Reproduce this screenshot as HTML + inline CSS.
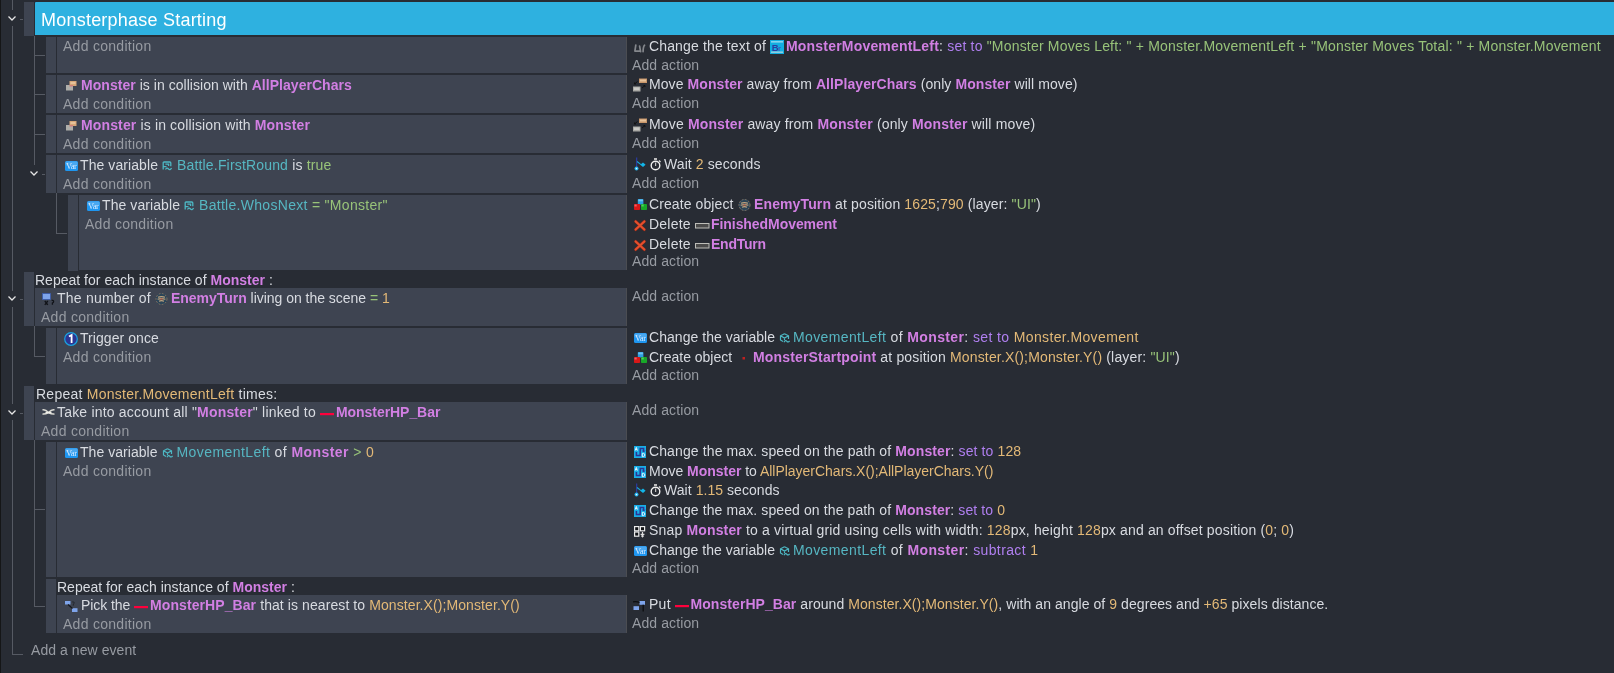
<!DOCTYPE html><html><head><meta charset="utf-8"><style>
html,body{margin:0;padding:0;}
body{width:1614px;height:673px;overflow:hidden;background:#282c34;position:relative;font-family:"Liberation Sans",sans-serif;}
body>div{position:absolute;}
.t{height:16px;line-height:16px;font-size:14px;white-space:pre;will-change:transform;color:#d8dbe1;}
.w{color:#d8dbe1;}
.add{color:#979ba2;}
.o{color:#d27fe3;font-weight:bold;}
.v{color:#56b6c2;}
.str{color:#98c379;}
.num{color:#e3b977;}
.op{color:#b07ff0;}
.hd{color:#ffffff;font-size:18px;}
.ic{display:inline-block;position:relative;height:0;vertical-align:baseline;}
.ic svg{position:absolute;left:0;display:block;overflow:visible;}
</style></head><body>
<div style="left:0px;top:0px;width:1px;height:673px;background:#151617;"></div>
<div style="left:12px;top:0px;width:1px;height:10px;background:#565a63;"></div>
<div style="left:12px;top:26px;width:1px;height:265px;background:#565a63;"></div>
<div style="left:12px;top:307px;width:1px;height:97px;background:#565a63;"></div>
<div style="left:12px;top:420px;width:1px;height:235px;background:#565a63;"></div>
<div style="left:12px;top:654px;width:11px;height:1px;background:#565a63;"></div>
<div style="left:24px;top:2px;width:10px;height:34px;background:#3e4451;"></div>
<div style="left:35px;top:2px;width:1579px;height:33px;background:#2eb1e0;border-top-left-radius:1px;"></div>
<div class="t" style="left:41px;top:12px;letter-spacing:0.223px;"><span class="hd">Monsterphase Starting</span></div>
<div style="left:34px;top:36px;width:1px;height:129px;background:#565a63;"></div>
<div style="left:46px;top:37px;width:10px;height:36px;background:#3e4451;"></div>
<div style="left:57px;top:37px;width:569px;height:36px;background:#3e4451;"></div>
<div style="left:626px;top:37px;width:1px;height:36px;background:#4b4d52;"></div>
<div style="left:35px;top:55px;width:10px;height:1px;background:#565a63;"></div>
<div class="t" style="left:63px;top:38px;letter-spacing:0.281px;"><span class="add">Add condition</span></div>
<div class="t" style="left:634px;top:38px;letter-spacing:0.141px;"><span class="ic" style="width:11px;margin-left:0px;margin-right:4px"><svg style="top:-7px" width="11" height="9" viewBox="0 0 11 9"><path d="M1.8 1.2 L0.9 7 M5.6 2.2 L6.6 7.6 M1 7.2 H6.4 M10.6 1.2 Q9.2 2.4 9.1 7.6" stroke="#84878c" stroke-width="1.7" fill="none" stroke-linecap="round"/></svg></span><span class="w">Change the text of </span></div>
<div class="t" style="left:770px;top:38px;letter-spacing:0.194px;"><span class="ic" style="width:14px;margin-left:0px;margin-right:2px"><svg style="top:-11px" width="14" height="14" viewBox="0 0 14 14"><rect x="0" y="0" width="14" height="14" fill="#12aee0"/><rect x="1" y="1" width="12" height="1.6" fill="#84d4ee"/><rect x="1" y="11.4" width="12" height="1.6" fill="#8ccbe0"/><text x="1.8" y="10.6" font-family="Liberation Sans" font-weight="bold" font-size="9.5" fill="#2b3aa0">B</text><text x="8" y="10.6" font-family="Liberation Sans" font-weight="bold" font-size="7.5" fill="#3a5ab8">r</text></svg></span><span class="o">MonsterMovementLeft</span><span class="w">: </span><span class="op">set to</span><span class="str"> "Monster Moves Left: " + Monster.MovementLeft + "Monster Moves Total: " + Monster.Movement</span></div>
<div class="t" style="left:632px;top:57px;letter-spacing:0.103px;"><span class="add">Add action</span></div>
<div style="left:46px;top:75px;width:10px;height:38px;background:#3e4451;"></div>
<div style="left:57px;top:75px;width:569px;height:38px;background:#3e4451;"></div>
<div style="left:626px;top:75px;width:1px;height:38px;background:#4b4d52;"></div>
<div style="left:35px;top:94px;width:10px;height:1px;background:#565a63;"></div>
<div class="t" style="left:66px;top:77px;letter-spacing:0.037px;"><span class="ic" style="width:11px;margin-left:0px;margin-right:4px"><svg style="top:-9px" width="11" height="10" viewBox="0 0 11 10"><rect x="3.5" y="0" width="7" height="5" fill="#d6a677"/><rect x="4.5" y="1" width="5" height="2" fill="#e6c29a"/><rect x="0" y="4" width="7" height="5.5" fill="#aeaeaa"/><rect x="3.5" y="4" width="3.5" height="1.5" fill="#cf7f7c"/></svg></span><span class="o">Monster</span><span class="w"> is in collision with </span><span class="o">AllPlayerChars</span></div>
<div class="t" style="left:63px;top:96px;letter-spacing:0.281px;"><span class="add">Add condition</span></div>
<div class="t" style="left:633px;top:76px;letter-spacing:0.085px;"><span class="ic" style="width:14px;margin-left:0px;margin-right:2px"><svg style="top:-11px" width="14" height="14" viewBox="0 0 14 14"><rect x="6" y="0.5" width="8" height="4.5" fill="#c8966a"/><rect x="7" y="1.5" width="6" height="2" fill="#e5c29a"/><rect x="0" y="8.5" width="7.5" height="5" fill="#a8a8a4"/><rect x="1" y="9.5" width="5.5" height="2.5" fill="#c9c9c5"/><path d="M4.5 3.5 L1.5 6 M1.5 6 H3 M1.5 6 V4.5 M9 10 L12 7.5 M12 7.5 H10.5 M12 7.5 V9" stroke="#111" stroke-width="1" fill="none"/></svg></span><span class="w">Move </span><span class="o">Monster</span><span class="w"> away from </span><span class="o">AllPlayerChars</span><span class="w"> (only </span><span class="o">Monster</span><span class="w"> will move)</span></div>
<div class="t" style="left:632px;top:95px;letter-spacing:0.103px;"><span class="add">Add action</span></div>
<div style="left:46px;top:115px;width:10px;height:38px;background:#3e4451;"></div>
<div style="left:57px;top:115px;width:569px;height:38px;background:#3e4451;"></div>
<div style="left:626px;top:115px;width:1px;height:38px;background:#4b4d52;"></div>
<div style="left:35px;top:134px;width:10px;height:1px;background:#565a63;"></div>
<div class="t" style="left:66px;top:117px;letter-spacing:0.140px;"><span class="ic" style="width:11px;margin-left:0px;margin-right:4px"><svg style="top:-9px" width="11" height="10" viewBox="0 0 11 10"><rect x="3.5" y="0" width="7" height="5" fill="#d6a677"/><rect x="4.5" y="1" width="5" height="2" fill="#e6c29a"/><rect x="0" y="4" width="7" height="5.5" fill="#aeaeaa"/><rect x="3.5" y="4" width="3.5" height="1.5" fill="#cf7f7c"/></svg></span><span class="o">Monster</span><span class="w"> is in collision with </span><span class="o">Monster</span></div>
<div class="t" style="left:63px;top:136px;letter-spacing:0.281px;"><span class="add">Add condition</span></div>
<div class="t" style="left:633px;top:116px;letter-spacing:0.149px;"><span class="ic" style="width:14px;margin-left:0px;margin-right:2px"><svg style="top:-11px" width="14" height="14" viewBox="0 0 14 14"><rect x="6" y="0.5" width="8" height="4.5" fill="#c8966a"/><rect x="7" y="1.5" width="6" height="2" fill="#e5c29a"/><rect x="0" y="8.5" width="7.5" height="5" fill="#a8a8a4"/><rect x="1" y="9.5" width="5.5" height="2.5" fill="#c9c9c5"/><path d="M4.5 3.5 L1.5 6 M1.5 6 H3 M1.5 6 V4.5 M9 10 L12 7.5 M12 7.5 H10.5 M12 7.5 V9" stroke="#111" stroke-width="1" fill="none"/></svg></span><span class="w">Move </span><span class="o">Monster</span><span class="w"> away from </span><span class="o">Monster</span><span class="w"> (only </span><span class="o">Monster</span><span class="w"> will move)</span></div>
<div class="t" style="left:632px;top:135px;letter-spacing:0.103px;"><span class="add">Add action</span></div>
<div style="left:46px;top:155px;width:10px;height:38px;background:#3e4451;"></div>
<div style="left:57px;top:155px;width:569px;height:38px;background:#3e4451;"></div>
<div style="left:626px;top:155px;width:1px;height:38px;background:#4b4d52;"></div>
<div class="t" style="left:65px;top:157px;letter-spacing:0.082px;"><span class="ic" style="width:13px;margin-left:0px;margin-right:2px"><svg style="top:-9px" width="13" height="10" viewBox="0 0 13 10"><rect x="0" y="0" width="13" height="10" rx="1.5" fill="#1e96f0"/><rect x="0.5" y="0.5" width="12" height="4" rx="1" fill="#4aa8f0"/><text x="6.5" y="8.3" font-family="Liberation Serif" font-size="8.5" fill="#dcecff" text-anchor="middle" textLength="11">Var</text></svg></span><span class="w">The variable </span></div>
<div class="t" style="left:162px;top:157px;letter-spacing:0.172px;"><span class="ic" style="width:10px;margin-left:0px;margin-right:5px"><svg style="top:-9px" width="10" height="9" viewBox="0 0 10 9"><path d="M1.2 8.5 V1.8 Q1.2 1 2 1 H7.8 Q8.8 1 8.8 2 V5.2 M3.4 3.2 H6.6 V5 M1.2 5.6 H4.5 M3.5 8.5 Q5 6 6.5 8 Q8 9.5 9.6 7.2" stroke="#4db8c4" stroke-width="1.3" fill="none"/></svg></span><span class="v">Battle.FirstRound</span><span class="w"> is </span><span class="str">true</span></div>
<div class="t" style="left:63px;top:176px;letter-spacing:0.281px;"><span class="add">Add condition</span></div>
<div class="t" style="left:634px;top:156px;letter-spacing:0.092px;"><span class="ic" style="width:12px;margin-left:0px;margin-right:4px"><svg style="top:-12px" width="12" height="14" viewBox="0 0 12 14"><rect x="2" y="0.5" width="1.3" height="10.5" fill="#2a3a9a"/><circle cx="2.5" cy="11.6" r="2" fill="#22b5ee"/><circle cx="2.5" cy="11.6" r="0.8" fill="#e8f8ff"/><path d="M3 4.5 L7 7.6" stroke="#1aa8d8" stroke-width="1.1"/><path d="M6.2 7.8 L9 5.6 L11.6 7.8 L9 10 Z" fill="#12b5e8"/></svg></span><span class="ic" style="width:11px;margin-left:0px;margin-right:3px"><svg style="top:-11px" width="11" height="13" viewBox="0 0 11 13"><rect x="4" y="0" width="3" height="2" fill="#bdbdbd"/><circle cx="5.5" cy="7.5" r="4.3" stroke="#f0f0f0" stroke-width="1.4" fill="none"/><rect x="5" y="4.5" width="1.2" height="3.5" fill="#c0c0c0"/><path d="M9 2.5 L10.5 4" stroke="#e0e0e0" stroke-width="1.2"/></svg></span><span class="w">Wait </span><span class="num">2</span><span class="w"> seconds</span></div>
<div class="t" style="left:632px;top:175px;letter-spacing:0.103px;"><span class="add">Add action</span></div>
<div style="left:56px;top:193px;width:1px;height:41px;background:#565a63;"></div>
<div style="left:57px;top:233px;width:10px;height:1px;background:#565a63;"></div>
<div style="left:68px;top:195px;width:10px;height:75px;background:#3e4451;"></div>
<div style="left:79px;top:195px;width:547px;height:75px;background:#3e4451;"></div>
<div style="left:626px;top:195px;width:1px;height:75px;background:#4b4d52;"></div>
<div style="left:68px;top:270px;width:10px;height:1px;background:#3e4451;"></div>
<div class="t" style="left:87px;top:197px;letter-spacing:0.082px;"><span class="ic" style="width:13px;margin-left:0px;margin-right:2px"><svg style="top:-9px" width="13" height="10" viewBox="0 0 13 10"><rect x="0" y="0" width="13" height="10" rx="1.5" fill="#1e96f0"/><rect x="0.5" y="0.5" width="12" height="4" rx="1" fill="#4aa8f0"/><text x="6.5" y="8.3" font-family="Liberation Serif" font-size="8.5" fill="#dcecff" text-anchor="middle" textLength="11">Var</text></svg></span><span class="w">The variable </span></div>
<div class="t" style="left:184px;top:197px;letter-spacing:0.298px;"><span class="ic" style="width:10px;margin-left:0px;margin-right:5px"><svg style="top:-9px" width="10" height="9" viewBox="0 0 10 9"><path d="M1.2 8.5 V1.8 Q1.2 1 2 1 H7.8 Q8.8 1 8.8 2 V5.2 M3.4 3.2 H6.6 V5 M1.2 5.6 H4.5 M3.5 8.5 Q5 6 6.5 8 Q8 9.5 9.6 7.2" stroke="#4db8c4" stroke-width="1.3" fill="none"/></svg></span><span class="v">Battle.WhosNext</span><span class="str"> = </span><span class="str">"Monster"</span></div>
<div class="t" style="left:85px;top:216px;letter-spacing:0.281px;"><span class="add">Add condition</span></div>
<div class="t" style="left:634px;top:196px;letter-spacing:0.095px;"><span class="ic" style="width:13px;margin-left:0px;margin-right:2px"><svg style="top:-10px" width="13" height="11" viewBox="0 0 13 11"><rect x="3.8" y="0" width="5.6" height="5.6" rx="0.8" fill="#2e9fe0"/><rect x="4.3" y="0.5" width="4.6" height="1.8" fill="#6cc6f2"/><rect x="0" y="5" width="6" height="6" rx="0.8" fill="#d81818"/><rect x="7" y="5" width="6" height="6" rx="0.8" fill="#18a828"/><rect x="0.5" y="5.5" width="2.2" height="2" fill="#f06060"/><rect x="7.5" y="5.5" width="2.2" height="2" fill="#50d060"/></svg></span><span class="w">Create object </span></div>
<div class="t" style="left:737.5px;top:196px;letter-spacing:0.125px;"><span class="ic" style="width:13px;margin-left:0px;margin-right:3px"><svg style="top:-10px" width="13" height="12" viewBox="0 0 13 12"><circle cx="6.5" cy="6" r="6" fill="#2a4458"/><circle cx="6.5" cy="6" r="5.5" stroke="#9c7e62" stroke-width="0.8" fill="none" stroke-dasharray="1.8 1.4"/><path d="M3 4.3 Q6.5 2.8 10 4.3 M2.6 6.2 Q6.5 5 10.4 6.2 M4 8.2 Q6.5 7.2 9 8.2" stroke="#c0a47f" stroke-width="1.2" fill="none"/><rect x="5.5" y="5.5" width="2" height="1.2" fill="#b24a3a"/></svg></span><span class="o">EnemyTurn</span><span class="w"> at position </span><span class="num">1625</span><span class="w">;</span><span class="num">790</span><span class="w"> (layer: </span><span class="str">"UI"</span><span class="w">)</span></div>
<div class="t" style="left:634px;top:216px;letter-spacing:0.234px;"><span class="ic" style="width:12px;margin-left:0px;margin-right:3px"><svg style="top:-9px" width="12" height="11" viewBox="0 0 12 11"><path d="M1.6 1.4 L10.4 9.6 M10.4 1.4 L1.6 9.6" stroke="#8a2a1a" stroke-width="2.9" stroke-linecap="round"/><path d="M1.6 1.4 L10.4 9.6 M10.4 1.4 L1.6 9.6" stroke="#e4502e" stroke-width="2" stroke-linecap="round"/></svg></span><span class="w">Delete </span></div>
<div class="t" style="left:695px;top:216px;letter-spacing:-0.062px;"><span class="ic" style="width:14px;margin-left:0px;margin-right:2px"><svg style="top:-6px" width="14" height="5" viewBox="0 0 14 5"><rect x="0.5" y="0.5" width="13.5" height="4.5" fill="#4a4a4a" stroke="#bdbdb8" stroke-width="1"/></svg></span><span class="o">FinishedMovement</span></div>
<div class="t" style="left:634px;top:236px;letter-spacing:0.234px;"><span class="ic" style="width:12px;margin-left:0px;margin-right:3px"><svg style="top:-9px" width="12" height="11" viewBox="0 0 12 11"><path d="M1.6 1.4 L10.4 9.6 M10.4 1.4 L1.6 9.6" stroke="#8a2a1a" stroke-width="2.9" stroke-linecap="round"/><path d="M1.6 1.4 L10.4 9.6 M10.4 1.4 L1.6 9.6" stroke="#e4502e" stroke-width="2" stroke-linecap="round"/></svg></span><span class="w">Delete </span></div>
<div class="t" style="left:695px;top:236px;letter-spacing:-0.245px;"><span class="ic" style="width:14px;margin-left:0px;margin-right:2px"><svg style="top:-6px" width="14" height="5" viewBox="0 0 14 5"><rect x="0.5" y="0.5" width="13.5" height="4.5" fill="#4a4a4a" stroke="#bdbdb8" stroke-width="1"/></svg></span><span class="o">EndTurn</span></div>
<div class="t" style="left:632px;top:253px;letter-spacing:0.103px;"><span class="add">Add action</span></div>
<div style="left:24px;top:272px;width:10px;height:54px;background:#3e4451;"></div>
<div class="t" style="left:35px;top:272px;letter-spacing:0.012px;"><span class="w">Repeat for each instance of </span><span class="o">Monster</span><span class="w"> :</span></div>
<div style="left:35px;top:288px;width:591px;height:38px;background:#3e4451;"></div>
<div style="left:626px;top:288px;width:1px;height:38px;background:#4b4d52;"></div>
<div class="t" style="left:42px;top:290px;letter-spacing:0.219px;"><span class="ic" style="width:13px;margin-left:0px;margin-right:2px"><svg style="top:-10px" width="13" height="12" viewBox="0 0 13 12"><rect x="0.5" y="0.5" width="8" height="6" fill="#7ea4ea" stroke="#3a5aa8" stroke-width="0.8"/><path d="M2.8 8 L5.8 11.8 M5.8 8 L2.8 11.8 M9.6 7.4 Q11.8 7 11.6 8.6 Q11.4 9.6 10.4 10 V11.8" stroke="#111318" stroke-width="1.3" fill="none"/></svg></span><span class="w">The number of </span></div>
<div class="t" style="left:155px;top:290px;letter-spacing:-0.025px;"><span class="ic" style="width:13px;margin-left:0px;margin-right:3px"><svg style="top:-10px" width="13" height="12" viewBox="0 0 13 12"><circle cx="6.5" cy="6" r="6" fill="#2a4458"/><circle cx="6.5" cy="6" r="5.5" stroke="#9c7e62" stroke-width="0.8" fill="none" stroke-dasharray="1.8 1.4"/><path d="M3 4.3 Q6.5 2.8 10 4.3 M2.6 6.2 Q6.5 5 10.4 6.2 M4 8.2 Q6.5 7.2 9 8.2" stroke="#c0a47f" stroke-width="1.2" fill="none"/><rect x="5.5" y="5.5" width="2" height="1.2" fill="#b24a3a"/></svg></span><span class="o">EnemyTurn</span><span class="w"> living on the scene </span><span class="str">=</span><span class="num"> 1</span></div>
<div class="t" style="left:41px;top:309px;letter-spacing:0.281px;"><span class="add">Add condition</span></div>
<div class="t" style="left:632px;top:288px;letter-spacing:0.103px;"><span class="add">Add action</span></div>
<div style="left:34px;top:326px;width:1px;height:31px;background:#565a63;"></div>
<div style="left:35px;top:356px;width:10px;height:1px;background:#565a63;"></div>
<div style="left:46px;top:328px;width:10px;height:56px;background:#3e4451;"></div>
<div style="left:57px;top:328px;width:569px;height:56px;background:#3e4451;"></div>
<div style="left:626px;top:328px;width:1px;height:56px;background:#4b4d52;"></div>
<div class="t" style="left:64px;top:330px;letter-spacing:0.060px;"><span class="ic" style="width:14px;margin-left:0px;margin-right:2px"><svg style="top:-11px" width="14" height="14" viewBox="0 0 14 14"><circle cx="7" cy="7" r="6.3" fill="#2c3592" stroke="#1aa3e0" stroke-width="1.2"/><path d="M5 4.6 L7.6 3 V11" stroke="#fff" stroke-width="1.8" fill="none"/></svg></span><span class="w">Trigger once</span></div>
<div class="t" style="left:63px;top:349px;letter-spacing:0.281px;"><span class="add">Add condition</span></div>
<div class="t" style="left:634px;top:329px;letter-spacing:0.040px;"><span class="ic" style="width:13px;margin-left:0px;margin-right:2px"><svg style="top:-9px" width="13" height="10" viewBox="0 0 13 10"><rect x="0" y="0" width="13" height="10" rx="1.5" fill="#1e96f0"/><rect x="0.5" y="0.5" width="12" height="4" rx="1" fill="#4aa8f0"/><text x="6.5" y="8.3" font-family="Liberation Serif" font-size="8.5" fill="#dcecff" text-anchor="middle" textLength="11">Var</text></svg></span><span class="w">Change the variable </span></div>
<div class="t" style="left:779px;top:329px;letter-spacing:0.379px;"><span class="ic" style="width:11px;margin-left:0px;margin-right:3px"><svg style="top:-9px" width="11" height="10" viewBox="0 0 11 10"><path d="M5.5 0.8 L9.5 2.8 V6 M5.5 0.8 L1.5 2.8 V7 L4 8.5 M1.5 2.8 L5.5 5 L9.5 2.8 M5.5 5 V7 M5 9.2 Q6.5 6.5 8 8.5 Q9 9.7 10.6 7.8" stroke="#4db8c4" stroke-width="1.2" fill="none"/></svg></span><span class="v">MovementLeft</span><span class="w"> of </span><span class="o">Monster</span><span class="w">: </span><span class="op">set to</span><span class="num"> Monster.Movement</span></div>
<div class="t" style="left:634px;top:349px;letter-spacing:-0.012px;"><span class="ic" style="width:13px;margin-left:0px;margin-right:2px"><svg style="top:-10px" width="13" height="11" viewBox="0 0 13 11"><rect x="3.8" y="0" width="5.6" height="5.6" rx="0.8" fill="#2e9fe0"/><rect x="4.3" y="0.5" width="4.6" height="1.8" fill="#6cc6f2"/><rect x="0" y="5" width="6" height="6" rx="0.8" fill="#d81818"/><rect x="7" y="5" width="6" height="6" rx="0.8" fill="#18a828"/><rect x="0.5" y="5.5" width="2.2" height="2" fill="#f06060"/><rect x="7.5" y="5.5" width="2.2" height="2" fill="#50d060"/></svg></span><span class="w">Create object </span></div>
<div class="t" style="left:736px;top:349px;letter-spacing:0.160px;"><span class="ic" style="width:16px;margin-left:0px;margin-right:1px"><svg style="top:-5px" width="16" height="3" viewBox="0 0 16 3"><rect x="6.5" y="0" width="2.5" height="2.5" fill="#c02020"/></svg></span><span class="o">MonsterStartpoint</span><span class="w"> at position </span><span class="num">Monster.X();Monster.Y()</span><span class="w"> (layer: </span><span class="str">"UI"</span><span class="w">)</span></div>
<div class="t" style="left:632px;top:367px;letter-spacing:0.103px;"><span class="add">Add action</span></div>
<div style="left:24px;top:386px;width:10px;height:54px;background:#3e4451;"></div>
<div class="t" style="left:36px;top:386px;letter-spacing:0.256px;"><span class="w">Repeat </span><span class="num">Monster.MovementLeft</span><span class="w"> times:</span></div>
<div style="left:35px;top:402px;width:591px;height:38px;background:#3e4451;"></div>
<div style="left:626px;top:402px;width:1px;height:38px;background:#4b4d52;"></div>
<div class="t" style="left:42px;top:404px;letter-spacing:0.189px;"><span class="ic" style="width:13px;margin-left:0px;margin-right:2px"><svg style="top:-8px" width="13" height="6" viewBox="0 0 13 6"><path d="M0.5 1 Q3 0 6.5 3.5 Q10 0 12.5 1 M0.5 5 Q3 5.5 6.5 3.5 Q10 5.5 12.5 5" stroke="#d8d8d2" stroke-width="1.5" fill="none"/><rect x="3.5" y="2.9" width="6" height="1.5" fill="#f0f0ea"/></svg></span><span class="w">Take into account all "</span><span class="o">Monster</span><span class="w">" linked to </span></div>
<div class="t" style="left:320px;top:404px;letter-spacing:-0.056px;"><span class="ic" style="width:14px;margin-left:0px;margin-right:2px"><svg style="top:-4px" width="14" height="3" viewBox="0 0 14 3"><rect x="0" y="0" width="14" height="2.2" fill="#ff003c"/></svg></span><span class="o">MonsterHP_Bar</span></div>
<div class="t" style="left:41px;top:423px;letter-spacing:0.281px;"><span class="add">Add condition</span></div>
<div class="t" style="left:632px;top:402px;letter-spacing:0.103px;"><span class="add">Add action</span></div>
<div style="left:34px;top:440px;width:1px;height:167px;background:#565a63;"></div>
<div style="left:35px;top:509px;width:10px;height:1px;background:#565a63;"></div>
<div style="left:35px;top:606px;width:10px;height:1px;background:#565a63;"></div>
<div style="left:46px;top:442px;width:10px;height:135px;background:#3e4451;"></div>
<div style="left:57px;top:442px;width:569px;height:135px;background:#3e4451;"></div>
<div style="left:626px;top:442px;width:1px;height:135px;background:#4b4d52;"></div>
<div class="t" style="left:65px;top:444px;letter-spacing:0.043px;"><span class="ic" style="width:13px;margin-left:0px;margin-right:2px"><svg style="top:-9px" width="13" height="10" viewBox="0 0 13 10"><rect x="0" y="0" width="13" height="10" rx="1.5" fill="#1e96f0"/><rect x="0.5" y="0.5" width="12" height="4" rx="1" fill="#4aa8f0"/><text x="6.5" y="8.3" font-family="Liberation Serif" font-size="8.5" fill="#dcecff" text-anchor="middle" textLength="11">Var</text></svg></span><span class="w">The variable </span></div>
<div class="t" style="left:161.5px;top:444px;letter-spacing:0.422px;"><span class="ic" style="width:11px;margin-left:0px;margin-right:3.5px"><svg style="top:-9px" width="11" height="10" viewBox="0 0 11 10"><path d="M5.5 0.8 L9.5 2.8 V6 M5.5 0.8 L1.5 2.8 V7 L4 8.5 M1.5 2.8 L5.5 5 L9.5 2.8 M5.5 5 V7 M5 9.2 Q6.5 6.5 8 8.5 Q9 9.7 10.6 7.8" stroke="#4db8c4" stroke-width="1.2" fill="none"/></svg></span><span class="v">MovementLeft</span><span class="w"> of </span><span class="o">Monster</span><span class="str"> &gt; </span><span class="num">0</span></div>
<div class="t" style="left:63px;top:463px;letter-spacing:0.281px;"><span class="add">Add condition</span></div>
<div class="t" style="left:634px;top:443px;letter-spacing:0.114px;"><span class="ic" style="width:12px;margin-left:0px;margin-right:3px"><svg style="top:-10px" width="12" height="12" viewBox="0 0 12 12"><rect x="0" y="0" width="12" height="12" fill="#19ade6"/><path d="M9.6 5.6 V2.4 H6.2 V9.6 H2.4 V6" stroke="#2b3596" stroke-width="1.5" fill="none"/><path d="M8.4 4.6 L9.6 6 L10.8 4.6" stroke="#2b3596" stroke-width="1" fill="none"/><path d="M1.2 4.6 L2.3 1.4 L3.4 4.6 M1.6 3.6 H3" stroke="#e6f3ff" stroke-width="1" fill="none"/><path d="M8.3 7.4 V10.6 H9.4 Q10.8 10.6 10.8 9 Q10.8 7.4 9.4 7.4 Z" stroke="#e6f3ff" stroke-width="1" fill="none"/></svg></span><span class="w">Change the max. speed on the path of </span><span class="o">Monster</span><span class="w">: </span><span class="op">set to</span><span class="num"> 128</span></div>
<div class="t" style="left:634px;top:463px;letter-spacing:-0.021px;"><span class="ic" style="width:12px;margin-left:0px;margin-right:3px"><svg style="top:-10px" width="12" height="12" viewBox="0 0 12 12"><rect x="0" y="0" width="12" height="12" fill="#19ade6"/><path d="M9.6 5.6 V2.4 H6.2 V9.6 H2.4 V6" stroke="#2b3596" stroke-width="1.5" fill="none"/><path d="M8.4 4.6 L9.6 6 L10.8 4.6" stroke="#2b3596" stroke-width="1" fill="none"/><path d="M1.2 4.6 L2.3 1.4 L3.4 4.6 M1.6 3.6 H3" stroke="#e6f3ff" stroke-width="1" fill="none"/><path d="M8.3 7.4 V10.6 H9.4 Q10.8 10.6 10.8 9 Q10.8 7.4 9.4 7.4 Z" stroke="#e6f3ff" stroke-width="1" fill="none"/></svg></span><span class="w">Move </span><span class="o">Monster</span><span class="w"> to </span><span class="num">AllPlayerChars.X();AllPlayerChars.Y()</span></div>
<div class="t" style="left:634px;top:482px;letter-spacing:0.055px;"><span class="ic" style="width:12px;margin-left:0px;margin-right:4px"><svg style="top:-12px" width="12" height="14" viewBox="0 0 12 14"><rect x="2" y="0.5" width="1.3" height="10.5" fill="#2a3a9a"/><circle cx="2.5" cy="11.6" r="2" fill="#22b5ee"/><circle cx="2.5" cy="11.6" r="0.8" fill="#e8f8ff"/><path d="M3 4.5 L7 7.6" stroke="#1aa8d8" stroke-width="1.1"/><path d="M6.2 7.8 L9 5.6 L11.6 7.8 L9 10 Z" fill="#12b5e8"/></svg></span><span class="ic" style="width:11px;margin-left:0px;margin-right:3px"><svg style="top:-11px" width="11" height="13" viewBox="0 0 11 13"><rect x="4" y="0" width="3" height="2" fill="#bdbdbd"/><circle cx="5.5" cy="7.5" r="4.3" stroke="#f0f0f0" stroke-width="1.4" fill="none"/><rect x="5" y="4.5" width="1.2" height="3.5" fill="#c0c0c0"/><path d="M9 2.5 L10.5 4" stroke="#e0e0e0" stroke-width="1.2"/></svg></span><span class="w">Wait </span><span class="num">1.15</span><span class="w"> seconds</span></div>
<div class="t" style="left:634px;top:502px;letter-spacing:0.110px;"><span class="ic" style="width:12px;margin-left:0px;margin-right:3px"><svg style="top:-10px" width="12" height="12" viewBox="0 0 12 12"><rect x="0" y="0" width="12" height="12" fill="#19ade6"/><path d="M9.6 5.6 V2.4 H6.2 V9.6 H2.4 V6" stroke="#2b3596" stroke-width="1.5" fill="none"/><path d="M8.4 4.6 L9.6 6 L10.8 4.6" stroke="#2b3596" stroke-width="1" fill="none"/><path d="M1.2 4.6 L2.3 1.4 L3.4 4.6 M1.6 3.6 H3" stroke="#e6f3ff" stroke-width="1" fill="none"/><path d="M8.3 7.4 V10.6 H9.4 Q10.8 10.6 10.8 9 Q10.8 7.4 9.4 7.4 Z" stroke="#e6f3ff" stroke-width="1" fill="none"/></svg></span><span class="w">Change the max. speed on the path of </span><span class="o">Monster</span><span class="w">: </span><span class="op">set to</span><span class="num"> 0</span></div>
<div class="t" style="left:634px;top:522px;letter-spacing:0.158px;"><span class="ic" style="width:11px;margin-left:0px;margin-right:4px"><svg style="top:-9px" width="11" height="11" viewBox="0 0 11 11"><rect x="0.6" y="0.6" width="4.2" height="4.2" stroke="#ececec" stroke-width="1.2" fill="#111316"/><rect x="6.4" y="0.6" width="4.2" height="4.2" stroke="#ececec" stroke-width="1.2" fill="#111316"/><rect x="0.6" y="6.0" width="4.2" height="4.2" stroke="#ececec" stroke-width="1.2" fill="#111316"/><path d="M8.5 6 V10.6 M6.6 8.3 H10.4 M7.4 9.6 L8.5 10.8 L9.6 9.6" stroke="#e0e0e0" stroke-width="1.2" fill="none"/></svg></span><span class="w">Snap </span><span class="o">Monster</span><span class="w"> to a virtual grid using cells with width: </span><span class="num">128</span><span class="w">px, height </span><span class="num">128</span><span class="w">px and an offset position (</span><span class="num">0</span><span class="w">; </span><span class="num">0</span><span class="w">)</span></div>
<div class="t" style="left:634px;top:542px;letter-spacing:0.040px;"><span class="ic" style="width:13px;margin-left:0px;margin-right:2px"><svg style="top:-9px" width="13" height="10" viewBox="0 0 13 10"><rect x="0" y="0" width="13" height="10" rx="1.5" fill="#1e96f0"/><rect x="0.5" y="0.5" width="12" height="4" rx="1" fill="#4aa8f0"/><text x="6.5" y="8.3" font-family="Liberation Serif" font-size="8.5" fill="#dcecff" text-anchor="middle" textLength="11">Var</text></svg></span><span class="w">Change the variable </span></div>
<div class="t" style="left:779px;top:542px;letter-spacing:0.388px;"><span class="ic" style="width:11px;margin-left:0px;margin-right:3px"><svg style="top:-9px" width="11" height="10" viewBox="0 0 11 10"><path d="M5.5 0.8 L9.5 2.8 V6 M5.5 0.8 L1.5 2.8 V7 L4 8.5 M1.5 2.8 L5.5 5 L9.5 2.8 M5.5 5 V7 M5 9.2 Q6.5 6.5 8 8.5 Q9 9.7 10.6 7.8" stroke="#4db8c4" stroke-width="1.2" fill="none"/></svg></span><span class="v">MovementLeft</span><span class="w"> of </span><span class="o">Monster</span><span class="w">: </span><span class="op">subtract</span><span class="num"> 1</span></div>
<div class="t" style="left:632px;top:560px;letter-spacing:0.103px;"><span class="add">Add action</span></div>
<div style="left:46px;top:579px;width:10px;height:54px;background:#3e4451;"></div>
<div class="t" style="left:57px;top:579px;letter-spacing:0.012px;"><span class="w">Repeat for each instance of </span><span class="o">Monster</span><span class="w"> :</span></div>
<div style="left:57px;top:595px;width:569px;height:38px;background:#3e4451;"></div>
<div style="left:626px;top:595px;width:1px;height:38px;background:#4b4d52;"></div>
<div class="t" style="left:65px;top:597px;letter-spacing:-0.078px;"><span class="ic" style="width:13px;margin-left:0px;margin-right:3px"><svg style="top:-9px" width="13" height="11" viewBox="0 0 13 11"><rect x="0" y="0" width="5.5" height="3.5" fill="#7ea4ea"/><rect x="7" y="7.2" width="5.5" height="3.8" fill="#7ea4ea"/><path d="M3 3.5 L7.5 7.5" stroke="#15171b" stroke-width="1.1"/><path d="M7.2 1 Q9 0.4 9.2 1.8 Q9.2 2.8 8.3 3.2 V4.6" stroke="#22252b" stroke-width="1" fill="none"/></svg></span><span class="w">Pick the </span></div>
<div class="t" style="left:134px;top:597px;letter-spacing:0.087px;"><span class="ic" style="width:14px;margin-left:0px;margin-right:2px"><svg style="top:-4px" width="14" height="3" viewBox="0 0 14 3"><rect x="0" y="0" width="14" height="2.2" fill="#ff003c"/></svg></span><span class="o">MonsterHP_Bar</span><span class="w"> that is nearest to </span><span class="num">Monster.X();Monster.Y()</span></div>
<div class="t" style="left:63px;top:616px;letter-spacing:0.281px;"><span class="add">Add condition</span></div>
<div class="t" style="left:633px;top:596px;letter-spacing:0.273px;"><span class="ic" style="width:12px;margin-left:0px;margin-right:4px"><svg style="top:-8px" width="12" height="11" viewBox="0 0 12 11"><rect x="6.5" y="0" width="5.5" height="3.8" fill="#7ea4ea"/><rect x="0.5" y="5.2" width="5.5" height="3.8" fill="#7ea4ea"/><path d="M0 0.8 Q4 0.2 6.5 1.5 M10.2 3.8 V10.5" stroke="#0d0e10" stroke-width="1.3" fill="none"/></svg></span><span class="w">Put </span></div>
<div class="t" style="left:675px;top:596px;letter-spacing:0.064px;"><span class="ic" style="width:14px;margin-left:0px;margin-right:1.5px"><svg style="top:-4px" width="14" height="3" viewBox="0 0 14 3"><rect x="0" y="0" width="14" height="2.2" fill="#ff003c"/></svg></span><span class="o">MonsterHP_Bar</span><span class="w"> around </span><span class="num">Monster.X();Monster.Y()</span><span class="w">, with an angle of </span><span class="num">9</span><span class="w"> degrees and </span><span class="num">+65</span><span class="w"> pixels distance.</span></div>
<div class="t" style="left:632px;top:615px;letter-spacing:0.103px;"><span class="add">Add action</span></div>
<div class="t" style="left:31px;top:642px;letter-spacing:0.060px;"><span class="add">Add a new event</span></div>
<svg style="position:absolute;left:8px;top:15px" width="9" height="6" viewBox="0 0 9 6"><path d="M0.5 1.5 L4 5 L7.5 1.5" stroke="#e6e6e6" stroke-width="1.25" fill="none"/></svg>
<div style="left:20px;top:19px;width:3px;height:1px;background:#565a63;"></div>
<svg style="position:absolute;left:30px;top:170px" width="9" height="6" viewBox="0 0 9 6"><path d="M0.5 1.5 L4 5 L7.5 1.5" stroke="#e6e6e6" stroke-width="1.25" fill="none"/></svg>
<div style="left:42px;top:174px;width:3px;height:1px;background:#565a63;"></div>
<svg style="position:absolute;left:8px;top:295px" width="9" height="6" viewBox="0 0 9 6"><path d="M0.5 1.5 L4 5 L7.5 1.5" stroke="#e6e6e6" stroke-width="1.25" fill="none"/></svg>
<div style="left:20px;top:299px;width:3px;height:1px;background:#565a63;"></div>
<svg style="position:absolute;left:8px;top:409px" width="9" height="6" viewBox="0 0 9 6"><path d="M0.5 1.5 L4 5 L7.5 1.5" stroke="#e6e6e6" stroke-width="1.25" fill="none"/></svg>
<div style="left:20px;top:413px;width:3px;height:1px;background:#565a63;"></div>
</body></html>
